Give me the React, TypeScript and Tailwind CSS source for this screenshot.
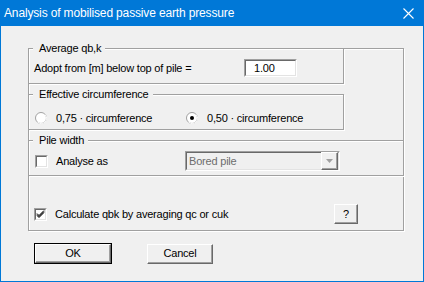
import type { ReactNode } from 'react'

const ui = { fontFamily: '"Liberation Sans", Arial, sans-serif' }

// etched frame in the classic dialog style
const etched = 'border border-[#a0a0a0] shadow-[inset_1px_1px_0_#fff,1px_1px_0_#fff]'
const sunken =
  'border border-t-[#a0a0a0] border-l-[#a0a0a0] border-b-white border-r-white'
const sunkenInner =
  'border border-t-[#696969] border-l-[#696969] border-b-[#e3e3e3] border-r-[#e3e3e3]'
const raised =
  'border border-t-white border-l-white border-b-[#696969] border-r-[#696969] shadow-[inset_-1px_-1px_0_#a0a0a0]'

function GroupBox({ title, className, children }: { title: string; className: string; children?: ReactNode }) {
  return (
    <div className={`relative ${etched} ${className}`}>
      <span className="absolute left-[4px] top-[-8px] bg-[#f0f0f0] pl-[6px] pr-[4px] leading-[14px]">{title}</span>
      {children}
    </div>
  )
}

function Radio({ checked }: { checked?: boolean }) {
  return (
    <svg width="12" height="12" viewBox="0 0 12 12" className="shrink-0">
      <circle cx="6" cy="6" r="5.5" fill="#fff" stroke="#a0a0a0" />
      <path d="M10 2.5 A5 5 0 0 1 2.5 10" fill="none" stroke="#fff" />
      {checked && <circle cx="6" cy="6" r="2" fill="#000" />}
    </svg>
  )
}

function Check({ checked }: { checked?: boolean }) {
  return (
    <div className={`h-[13px] w-[13px] shrink-0 bg-white ${sunken}`}>
      <div className={`h-full w-full ${sunkenInner}`}>
        {checked && (
          <svg width="9" height="9" viewBox="0 0 9 9">
            <path d="M1 3.5 L3 5.5 L8 0.5 M1 4.5 L3 6.5 L8 1.5 M1 5.5 L3 7.5 L8 2.5" fill="none" stroke="#000" strokeWidth="1" />
          </svg>
        )}
      </div>
    </div>
  )
}

export default function App() {
  return (
    <div
      className="flex h-[282px] w-[424px] flex-col bg-[#0078d7] px-px pb-px text-[11px] tracking-[-0.2px] text-black"
      style={ui}
    >
      <div className="-mx-px flex h-[26px] shrink-0 items-center justify-between pl-[4px] pr-[10px] text-[12px] tracking-[-0.15px] text-white">
        <span>Analysis of mobilised passive earth pressure</span>
        <svg width="11" height="11" viewBox="0 0 11 11" className="mt-[1px]">
          <path d="M0.5 0.5 L10.5 10.5 M10.5 0.5 L0.5 10.5" stroke="#fff" strokeWidth="1.1" />
        </svg>
      </div>

      <div className="flex-1 bg-[#f0f0f0] pl-[27px] pt-[22px]">
        <div className={`h-[183px] w-[376px] ${etched}`}>
          <div className="-ml-px -mt-px flex flex-col">
            <GroupBox title="Average qb,k" className="h-[36px] w-[316px]">
              <div className="flex items-center pl-[5px] pt-[10px]">
                <span className="w-[210px]">Adopt from [m] below top of pile =</span>
                <div className={`h-[18px] w-[53px] bg-white ${sunken}`}>
                  <div className={`h-full w-full pl-[8px] leading-[14px] ${sunkenInner}`}>1.00</div>
                </div>
              </div>
            </GroupBox>

            <GroupBox title="Effective circumference" className="mt-[10px] h-[36px] w-[316px]">
              <div className="flex items-center pl-[6px] pt-[15px]">
                <div className="flex w-[151px] items-center gap-[9px]">
                  <Radio />
                  <span>0,75 · circumference</span>
                </div>
                <div className="flex items-center gap-[9px]">
                  <Radio checked />
                  <span>0,50 · circumference</span>
                </div>
              </div>
            </GroupBox>

            <GroupBox title="Pile width" className="mt-[10px] h-[36px] w-[376px]">
              <div className="flex items-center pl-[6px] pt-[10px]">
                <div className="flex w-[150px] items-center gap-[8px]">
                  <Check />
                  <span>Analyse as</span>
                </div>
                <div className={`flex h-[20px] w-[155px] items-center ${sunken}`}>
                  <div className={`flex h-full flex-1 items-center pl-[2px] text-[#6d6d6d] ${sunkenInner}`}>
                    <span className="flex-1">Bored pile</span>
                    <div className={`flex h-[18px] w-[17px] items-center justify-center ${raised}`}>
                      <svg width="7" height="4" viewBox="0 0 7 4">
                        <path d="M0 0 H7 L3.5 4 Z" fill="#a0a0a0" />
                      </svg>
                    </div>
                  </div>
                </div>
              </div>
            </GroupBox>

            <div className="mt-[28px] flex items-center pl-[6px] pr-[45px]">
              <div className="flex flex-1 items-center gap-[8px]">
                <Check checked />
                <span>Calculate qbk by averaging qc or cuk</span>
              </div>
              <button className={`h-[20px] w-[24px] bg-[#f0f0f0] leading-none ${raised}`}>?</button>
            </div>
          </div>
        </div>

        <div className="mt-[12px] flex items-center pl-[6px]">
          <button className="h-[21px] w-[78px] border border-black bg-[#f0f0f0]">
            <div className={`flex h-full w-full items-center justify-center ${raised}`}>OK</div>
          </button>
          <button className={`ml-[35px] h-[20px] w-[66px] bg-[#f0f0f0] ${raised}`}>Cancel</button>
        </div>
      </div>
    </div>
  )
}
